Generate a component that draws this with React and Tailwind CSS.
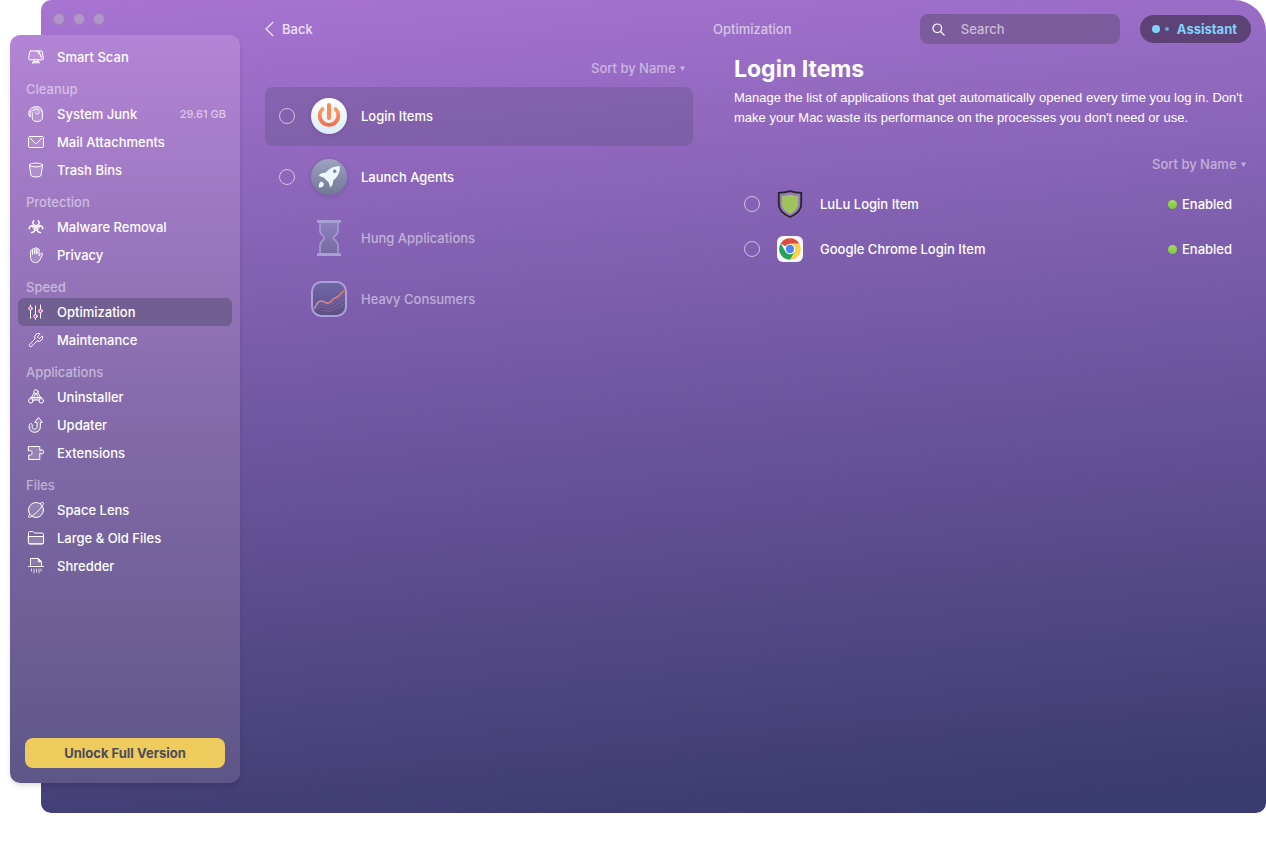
import { useState } from 'react';
import clsx from 'clsx';
import { Wrench } from 'lucide-react';

const Glyph = ({ children }) => (
  <svg
    viewBox="0 0 16 16"
    className="size-4 shrink-0 overflow-visible"
    fill="none"
    stroke="currentColor"
    strokeWidth="1"
    strokeLinecap="round"
    strokeLinejoin="round"
    aria-hidden="true"
  >
    {children}
  </svg>
);

const ScanIcon = () => (
  <Glyph>
    <path d="M2.6 1.9h10.8c.5 0 .8.3.9.8l1.1 6.8c.1.8-.3 1.3-1 1.3H1.6c-.7 0-1.1-.5-1-1.3l1.1-6.8c.1-.5.4-.8.9-.8z" fill="currentColor" fillOpacity=".15" />
    <path d="M8.2 2l5 4.6M10.8 2l2.6 7" />
    <path d="M6 10.9l-.4 1.5h4.8l-.4-1.5M4.5 13.8h7c0-.9-.5-1.4-1.1-1.4H5.6c-.6 0-1.1.5-1.1 1.4z" />
  </Glyph>
);

const JunkIcon = () => (
  <Glyph>
    <path d="M4.200 6v5.800c0 2.300 1.800 3.700 5 3.700s5.200-1.400 5.200-3.700V6.500C14.400 3 12 .6 8.700.6 5.300.6 2.300 2.200 1.200 5c-.8 2.200-.5 4.600.9 6V7.500c0-2 1.400-3.300 3.500-3.400" fill="currentColor" fillOpacity=".15" />
    <path d="M5.600 4.100C7.500 3.200 10 3.300 10.900 4.800c.9 1.500 0 3.100-1.500 3.100S7 6.800 7.600 5.900" />
    <path d="M4.500 1.800C7 2 9 1.600 11.500 3.200c1.500 1 2 2 2.600 3" strokeOpacity=".7" />
  </Glyph>
);

const MailIcon = () => (
  <Glyph>
    <rect x=".5" y="2.500" width="15" height="11" rx="1.200" fill="currentColor" fillOpacity=".12" />
    <path d="M2.500 4.300l4.400 4.900c.7.700 1.500.7 2.200 0l4.400-4.900" />
  </Glyph>
);

const BinIcon = () => (
  <Glyph>
    <path d="M1.500 3.200l1.300 9.800c.2 1.300 2.300 1.900 5.200 1.900s5-.6 5.200-1.900l1.300-9.800" fill="currentColor" fillOpacity=".15" />
    <ellipse cx="8" cy="3" rx="6.500" ry="1.900" />
  </Glyph>
);

const HazardIcon = () => (
  <Glyph>
    <g strokeWidth="1.500">
      <path d="M5.700 1.800C4.200 3.200 4.300 6.300 8 6.700c3.700-.4 3.800-3.500 2.300-4.900" />
      <path d="M1.200 9.800c0-2.500 3.300-4.300 5.400-1.500 1.300 3.100-.8 5.300-3.100 5.100" />
      <path d="M14.800 9.800c0-2.500-3.300-4.300-5.400-1.500-1.300 3.100.8 5.300 3.100 5.100" />
    </g>
    <path d="M4.600 6.300C4.400 9 5.500 11.200 8 11.500c2.500-.3 3.600-2.500 3.400-5.200" strokeWidth=".8" />
    <circle cx="8" cy="8.300" r="1.100" />
  </Glyph>
);

const HandIcon = () => (
  <Glyph>
    <path
      d="M2.500 9.500V4.200c0-1.300 2-1.300 2 0V7.500V2.500c0-1.400 2.200-1.400 2.200 0V7V1.700c0-1.400 2.200-1.400 2.200 0V7V2.700c0-1.400 2.200-1.400 2.200 0v6.100l1.700-2.300c.7-.9 2.200-.2 1.700.9-1 2.200-1.700 4-2.700 5.600-1 1.700-2.400 2.500-4.400 2.500-3.200 0-4.900-2.200-4.900-6z"
      fill="currentColor"
      fillOpacity=".15"
    />
  </Glyph>
);

const SlidersIcon = () => (
  <Glyph>
    <path d="M2.500 1v1.600M2.500 6.200v8M7.500 2v8.500M7.500 14v1.500M12.500 1v4M12.500 9v5.200" />
    <circle cx="2.500" cy="4.400" r="1.700" fill="#e83fa6" />
    <circle cx="7.500" cy="12.300" r="1.700" fill="#e83fa6" />
    <circle cx="12.500" cy="7" r="1.700" fill="#e83fa6" />
  </Glyph>
);

const UninstallIcon = () => (
  <Glyph>
    <circle cx="8" cy="2.800" r="2.100" />
    <path d="M6.100 3.800L3.400 8.500M9.900 3.800l2.700 4.700M7.500 5l-3 5.300M8.500 5l3 5.300" />
    <path d="M2.500 8.500h11M4.500 11h7" />
    <circle cx="2.800" cy="11.800" r="2.300" />
    <circle cx="13.200" cy="11.800" r="2.300" />
    <path d="M6 8.700l2 2 2-2" />
  </Glyph>
);

const UpdateIcon = () => (
  <Glyph>
    <path d="M10.700.8l3.700 4.500h-2v4.400c0 3.300-2.400 5.600-5.700 5.600S1 13 1 10c0-1.500.6-2.900 1.800-3.800L5 8.500c-.6.400-.8.900-.8 1.500 0 1.300 1 2.100 2.400 2.100s2.400-.9 2.400-2.300V5.300H7z" fill="currentColor" fillOpacity=".15" />
  </Glyph>
);

const PuzzleIcon = () => (
  <Glyph>
    <path d="M.7 1.500h11.100v4.200c1-.5 1.500-.9 2.300-.9.900 0 1.400.8 1.400 2s-.5 2.200-1.400 2.200c-.8 0-1.300-.4-2.300-.9v6.400H.7V10c1.200.4 3.500.2 3.500-2.200S2 5.300.7 5.900z" fill="currentColor" fillOpacity=".18" />
  </Glyph>
);

const PlanetIcon = () => (
  <Glyph>
    <circle cx="8" cy="8" r="7.500" fill="currentColor" fillOpacity=".18" />
    <path d="M12.300 1.500c1.400-.9 2.600-1.200 3-.8.900.9-1.500 4.400-5.200 8.200-3.900 3.900-8.400 7.300-9.400 6.400-.4-.4-.1-1.500.8-3" />
  </Glyph>
);

const FolderIcon = () => (
  <Glyph>
    <path d="M.5 12.700V2.800c0-.7.5-1.200 1.200-1.200h3c.8 0 1.300 1.400 2.100 1.400h7.500c.7 0 1.200.5 1.200 1.200v8.500c0 .7-.5 1.200-1.200 1.200H1.700c-.7 0-1.200-.5-1.200-1.200z" />
    <path d="M.5 6.500h15v6.200c0 .7-.5 1.200-1.200 1.200H1.700c-.7 0-1.200-.5-1.200-1.200z" fill="currentColor" fillOpacity=".18" />
  </Glyph>
);

const ShredIcon = () => (
  <Glyph>
    <path d="M2.500 7.500v-7h7.800l3.200 3.200v3.800" fill="currentColor" fillOpacity=".15" />
    <path d="M10.300.8v2.900h3z" fill="currentColor" />
    <path d="M.5 8.500h15" />
    <path d="M3.500 11v2M6 11v4M8.500 11v3M11 11v4M13 11v2" strokeOpacity=".8" />
  </Glyph>
);

const sections = [
  { items: [{ name: 'Smart Scan', icon: <ScanIcon /> }] },
  {
    title: 'Cleanup',
    items: [
      { name: 'System Junk', icon: <JunkIcon />, size: '29.61 GB' },
      { name: 'Mail Attachments', icon: <MailIcon /> },
      { name: 'Trash Bins', icon: <BinIcon /> },
    ],
  },
  {
    title: 'Protection',
    items: [
      { name: 'Malware Removal', icon: <HazardIcon /> },
      { name: 'Privacy', icon: <HandIcon /> },
    ],
  },
  {
    title: 'Speed',
    items: [
      { name: 'Optimization', icon: <SlidersIcon />, active: true },
      { name: 'Maintenance', icon: <Wrench className="size-4 shrink-0" strokeWidth={1.5} /> },
    ],
  },
  {
    title: 'Applications',
    items: [
      { name: 'Uninstaller', icon: <UninstallIcon /> },
      { name: 'Updater', icon: <UpdateIcon /> },
      { name: 'Extensions', icon: <PuzzleIcon /> },
    ],
  },
  {
    title: 'Files',
    items: [
      { name: 'Space Lens', icon: <PlanetIcon /> },
      { name: 'Large & Old Files', icon: <FolderIcon /> },
      { name: 'Shredder', icon: <ShredIcon /> },
    ],
  },
];

const PowerArt = () => (
  <svg viewBox="0 0 36 36" className="size-9 shrink-0 drop-shadow-sm" aria-hidden="true">
    <defs>
      <linearGradient id="powerDisc" x2="0" y2="1">
        <stop stopColor="#ffffff" />
        <stop offset="1" stopColor="#d9ecf8" />
      </linearGradient>
      <linearGradient id="powerMark" x2="0" y2="1">
        <stop stopColor="#ff9a5e" />
        <stop offset="1" stopColor="#f0704a" />
      </linearGradient>
    </defs>
    <circle cx="18" cy="18" r="18" fill="url(#powerDisc)" />
    <path d="M11.500 11a9.300 9.300 0 1 0 13 0" fill="none" stroke="url(#powerMark)" strokeWidth="3.800" strokeLinecap="round" />
    <rect x="16" y="5" width="4" height="17" rx="2" fill="#fb8a55" />
  </svg>
);

const RocketArt = () => (
  <svg viewBox="0 0 36 36" className="size-9 shrink-0 drop-shadow-sm" aria-hidden="true">
    <defs>
      <linearGradient id="rocketDisc" x2="0" y2="1">
        <stop stopColor="#9ba3c0" />
        <stop offset="1" stopColor="#717896" />
      </linearGradient>
    </defs>
    <circle cx="18" cy="18" r="18" fill="url(#rocketDisc)" />
    <path d="M28.800 7.200c.5 5-1.300 9.800-6.700 14.400.2 3-.6 5.200-2.800 6.800l-1.700-5.200-4.900-4.700-5-1.700c1.600-2.200 3.800-3.200 6.700-2.900C18.800 8.600 24 6.800 28.800 7.200z" fill="#eef6fc" />
    <circle cx="23.700" cy="12.300" r="1.700" fill="#7c83a2" />
    <path d="M9.500 22.900c1.800-.6 3.800 1.200 3.300 3.100-.5 1.800-2.500 2.500-5.100 2.600.1-2.700.4-5.100 1.800-5.700z" fill="#eef6fc" />
  </svg>
);

const HourglassArt = () => (
  <svg viewBox="0 0 36 36" className="size-9 shrink-0" aria-hidden="true">
    <defs>
      <linearGradient id="glassSand" x2="0" y2="1">
        <stop stopColor="#8d83c0" />
        <stop offset="1" stopColor="#77689f" />
      </linearGradient>
    </defs>
    <path
      d="M9 2h18v9.500c0 3-4.500 4.600-4.500 6.500s4.500 3.500 4.500 6.500V34H9v-9.500c0-3 4.500-4.600 4.500-6.500S9 14.500 9 11.500z"
      fill="url(#glassSand)"
      stroke="#a79cd3"
      strokeWidth="1.600"
    />
    <path d="M6 0h24v2.800H6zM6 33.200h24V36H6z" fill="#a9a0d6" />
  </svg>
);

const ChartArt = () => (
  <svg viewBox="0 0 36 36" className="size-9 shrink-0" aria-hidden="true" fill="none">
    <defs>
      <linearGradient id="chartFace" x2="0" y2="1">
        <stop stopColor="#7168a9" />
        <stop offset="1" stopColor="#5b4e83" />
      </linearGradient>
      <linearGradient id="chartLine">
        <stop stopColor="#b98bb0" />
        <stop offset=".5" stopColor="#c78398" />
        <stop offset="1" stopColor="#dd7358" />
      </linearGradient>
    </defs>
    <rect x="1" y="1" width="34" height="34" rx="9.500" fill="url(#chartFace)" stroke="#aca1da" strokeWidth="2" />
    <path d="M3 28c2.500-5 4-7.800 7-7.800 3.500 0 4 2.300 7 1.900 3.500-.5 4-4.600 8-5.500 3.500-1 5.500-5 9-8" stroke="url(#chartLine)" strokeWidth="1.800" />
    <g stroke="#94729c" strokeOpacity=".6">
      <path d="M4 28c4-5 6-5 8-4.500 3 1.500 6 1.500 8-.5 4-3 8-3.500 14-10" />
      <path d="M6 28c4-3 6-2 8-1 3 1 6 .5 8-1 3-2.500 7-3.500 12-9" />
      <path d="M10 30c4-1.500 5 .5 8 .300 4-.300 4-2.300 8-3.300 3-1 5-2 8-5" />
    </g>
  </svg>
);

const ShieldArt = () => (
  <svg viewBox="0 0 26 28" className="h-7 w-[26px] shrink-0" aria-hidden="true">
    <path d="M13 1.200c3.500 1 7.500 1.600 11.200 1.600V14c0 6-4.800 10.300-11.200 13C6.600 24.300 1.800 20 1.800 14V2.800C5.500 2.800 9.500 2.200 13 1.200z" fill="#9679b7" stroke="#27232c" strokeWidth="1.800" />
    <path d="M13 4.800c2.500.7 5.300 1.100 8.200 1.200v8c0 4.200-3.500 7.600-8.200 9.800C8.300 21.600 4.800 18.200 4.800 14V6c2.900-.1 5.700-.5 8.200-1.200z" fill="#9fc35c" />
  </svg>
);

const ChromeArt = () => (
  <svg viewBox="0 0 26 26" className="size-[26px] shrink-0" aria-hidden="true">
    <rect width="26" height="26" rx="6" fill="#f8f8fa" />
    <path d="M13 13L3.700 7.600A10.700 10.700 0 0 1 22.300 7.700H13z" fill="#db4c3f" />
    <path d="M22.300 7.700A10.700 10.700 0 0 1 13 23.700l4.600-8L13 7.700z" fill="#fdcf44" />
    <path d="M13 23.700A10.700 10.700 0 0 1 3.700 7.600l4.700 8 9.200.1z" fill="#27a05a" />
    <circle cx="13" cy="13" r="5.200" fill="#ffffff" />
    <circle cx="13" cy="13" r="4.200" fill="#4f86ec" />
  </svg>
);

const modules = [
  { name: 'Login Items', art: <PowerArt />, enabled: true },
  { name: 'Launch Agents', art: <RocketArt />, enabled: true },
  { name: 'Hung Applications', art: <HourglassArt /> },
  { name: 'Heavy Consumers', art: <ChartArt /> },
];

const loginItems = [
  { name: 'LuLu Login Item', art: <ShieldArt /> },
  { name: 'Google Chrome Login Item', art: <ChromeArt /> },
];

const SortSelect = ({ label }) => (
  <div className="flex h-5 items-center justify-end gap-1 text-white/50">
    <select aria-label={label} className="h-5 appearance-none bg-transparent">
      <option>Sort by Name</option>
    </select>
    <svg viewBox="0 0 5 5" className="size-[5px]" fill="currentColor" aria-hidden="true">
      <path d="M0 .5h5L2.500 5z" />
    </svg>
  </div>
);

const RoundCheck = () => (
  <input
    type="checkbox"
    className="size-4 shrink-0 appearance-none rounded-full border border-white/60 checked:bg-white/70"
  />
);

const Sidebar = () => (
  <aside className="-ml-[31px] flex flex-1 flex-col rounded-[10px] bg-linear-to-b from-[#b384d5] via-[#856bab] to-[#5d5687] px-2 pt-2 pb-[15px] shadow-md shadow-black/10">
    <nav>
      {sections.map((section) => (
        <div key={section.items[0].name}>
          {section.title ? <h2 className="px-2 pt-2 leading-[21px] text-white/50">{section.title}</h2> : null}
          {section.items.map((item) => (
            <a
              key={item.name}
              href="#"
              aria-current={item.active ? 'page' : undefined}
              className={clsx('flex h-7 items-center rounded-md pr-1.5 pl-2.5', item.active && 'bg-[#725f92]')}
            >
              {item.icon}
              <span className="ml-[13px] flex-1">{item.name}</span>
              {item.size ? <span className="text-[11px] text-white/60">{item.size}</span> : null}
            </a>
          ))}
        </div>
      ))}
    </nav>
    <button type="button" className="mx-[7px] mt-auto h-[30px] rounded-lg bg-[#edcb5c] font-bold text-[#4d4a5c]">
      Unlock Full Version
    </button>
  </aside>
);

const App = () => {
  const [query, setQuery] = useState('');

  return (
    <div className="min-h-screen bg-white pb-11 pl-[41px] font-['Inter',sans-serif] text-[13px] leading-5 font-medium text-white">
      <div className="flex min-h-[calc(100vh-44px)] rounded-[10px] rounded-tr-[32px] bg-linear-[175deg] from-[#a874d2] via-[#6d569f] to-[#3a3b6e] to-97%">
        <div className="flex w-[199px] shrink-0 flex-col pb-[30px]">
          <div className="flex h-[35px] gap-2 pt-[13px] pl-3">
            {['Close', 'Minimize', 'Zoom'].map((name) => (
              <button
                key={name}
                type="button"
                aria-label={name}
                className="size-3 rounded-full border border-[#9c84b6] bg-[#b296cb]"
              />
            ))}
          </div>
          <Sidebar />
        </div>

        <main className="min-w-0 flex-1 pt-3.5 pr-[15px] pl-[25px]">
          <header className="grid grid-cols-[428fr_538fr] gap-5">
            <button type="button" className="flex h-[30px] items-center gap-2 justify-self-start text-white/80">
              <svg viewBox="0 0 9 16" className="h-4 w-[9px]" fill="none" stroke="currentColor" strokeWidth="1.300" aria-hidden="true">
                <path d="M8.200 1L1 8l7.200 7" />
              </svg>
              Back
            </button>
            <div className="flex items-center">
              <h1 className="flex-1 text-white/60">Optimization</h1>
              <label className="flex h-[30px] w-[200px] items-center gap-4 rounded-lg bg-[#7c5c9d] pl-3">
                <svg viewBox="0 0 13 13" className="size-[13px] shrink-0" fill="none" stroke="currentColor" strokeWidth="1.200" strokeLinecap="round" aria-hidden="true">
                  <circle cx="5.300" cy="5.300" r="4.300" />
                  <path d="M8.500 8.500l3.700 3.700" />
                </svg>
                <input
                  type="search"
                  aria-label="Search"
                  placeholder="Search"
                  value={query}
                  onChange={(event) => setQuery(event.target.value)}
                  className="w-full min-w-0 bg-transparent outline-none placeholder:text-white/60"
                />
              </label>
              <button
                type="button"
                className="ml-5 flex h-7 items-center rounded-full bg-[#5d4275] pr-3.5 pl-3 font-bold text-[#82d2fb]"
              >
                <span className="size-2 rounded-full bg-[#80d3ff]" />
                <span className="ml-[5px] size-1 rounded-full bg-[#6ea6d3]" />
                <span className="ml-2">Assistant</span>
              </button>
            </div>
          </header>

          <div className="grid grid-cols-[428fr_538fr] gap-5">
            <section className="pt-3.5">
              <div className="pr-2">
                <SortSelect label="Sort modules" />
              </div>
              <ul className="mt-[9px] space-y-0.5">
                {modules.map((module, index) => (
                  <li key={module.name}>
                    <label
                      className={clsx(
                        'flex h-[59px] items-center rounded-lg px-3.5 pb-px',
                        index === 0 && 'bg-[#624f83]/35',
                      )}
                    >
                      {module.enabled ? <RoundCheck /> : <span className="size-4 shrink-0" />}
                      <span className="ml-4">{module.art}</span>
                      <span className={clsx('ml-3.5 leading-[22px]', !module.enabled && 'text-white/50')}>{module.name}</span>
                    </label>
                  </li>
                ))}
              </ul>
            </section>

            <section className="pt-2.5">
              <div className="pl-[21px]">
                <h2 className="text-[23px] leading-[30px] font-bold">Login Items</h2>
                <p className="mt-1 font-['Liberation_Sans',Arial,sans-serif] leading-5 font-normal">
                  Manage the list of applications that get automatically opened every time you log in. Don't make your
                  Mac waste its performance on the processes you don't need or use.
                </p>
              </div>
              <div className="mt-[26px] pr-[5px]">
                <SortSelect label="Sort login items" />
              </div>
              <ul className="mt-2">
                {loginItems.map((item) => (
                  <li key={item.name}>
                    <label className="flex h-[45px] items-center pr-[19px] pb-px pl-[31px]">
                      <RoundCheck />
                      <span className="ml-[17px]">{item.art}</span>
                      <span className="ml-[17px] flex-1">{item.name}</span>
                      <span className="mr-[5px] size-[9px] rounded-full bg-linear-to-b from-[#a5dc5c] to-[#7cc93c]" />
                      <span>Enabled</span>
                    </label>
                  </li>
                ))}
              </ul>
            </section>
          </div>
        </main>
      </div>
    </div>
  );
};

export default App;
